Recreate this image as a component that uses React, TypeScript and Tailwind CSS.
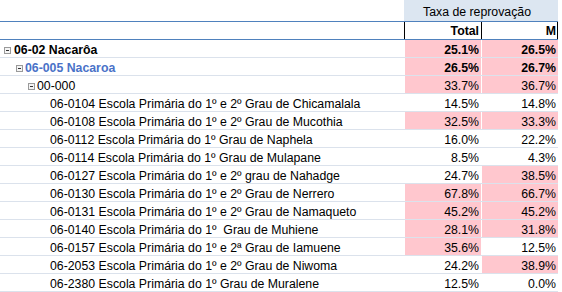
import React from "react";

type Row = {
  label: string;
  level: 0 | 1 | 2 | 3;
  total: string;
  m: string;
  pt: boolean;
  pm: boolean;
};

const rows: Row[] = [
  { label: "06-02 Nacarôa", level: 0, total: "25.1%", m: "26.5%", pt: true, pm: true },
  { label: "06-005 Nacaroa", level: 1, total: "26.5%", m: "26.7%", pt: true, pm: true },
  { label: "00-000", level: 2, total: "33.7%", m: "36.7%", pt: true, pm: true },
  { label: "06-0104 Escola Primária do 1º e 2º Grau de Chicamalala", level: 3, total: "14.5%", m: "14.8%", pt: false, pm: false },
  { label: "06-0108 Escola Primária do 1º e 2º Grau de Mucothia", level: 3, total: "32.5%", m: "33.3%", pt: true, pm: true },
  { label: "06-0112 Escola Primária do 1º Grau de Naphela", level: 3, total: "16.0%", m: "22.2%", pt: false, pm: false },
  { label: "06-0114 Escola Primária do 1º Grau de Mulapane", level: 3, total: "8.5%", m: "4.3%", pt: false, pm: false },
  { label: "06-0127 Escola Primária do 1º e 2º grau de Nahadge", level: 3, total: "24.7%", m: "38.5%", pt: false, pm: true },
  { label: "06-0130 Escola Primária do 1º e 2º Grau de Nerrero", level: 3, total: "67.8%", m: "66.7%", pt: true, pm: true },
  { label: "06-0131 Escola Primária do 1º e 2º Grau de Namaqueto", level: 3, total: "45.2%", m: "45.2%", pt: true, pm: true },
  { label: "06-0140 Escola Primária do 1º  Grau de Muhiene", level: 3, total: "28.1%", m: "31.8%", pt: true, pm: true },
  { label: "06-0157 Escola Primária do 1º e 2ª Grau de Iamuene", level: 3, total: "35.6%", m: "12.5%", pt: true, pm: false },
  { label: "06-2053 Escola Primária do 1º e 2º Grau de Niwoma", level: 3, total: "24.2%", m: "38.9%", pt: false, pm: true },
  { label: "06-2380 Escola Primária do 1º Grau de Muralene", level: 3, total: "12.5%", m: "0.0%", pt: false, pm: false },
];

function Minus() {
  return (
    <svg width="7" height="7" viewBox="0 0 7 7" className="shrink-0">
      <rect x="0.5" y="0.5" width="6" height="6" fill="#f4f4f4" stroke="#9a9a9a" />
      <rect x="2" y="3" width="3" height="1" fill="#333" />
    </svg>
  );
}

export default function App() {
  return (
    <div
      className="w-[562px] h-[292px] bg-white text-black overflow-hidden text-[12.3px]"
      style={{ fontFamily: '"Liberation Sans", Arial, sans-serif' }}
    >
      <div className="w-[558px]">
        {/* header row 1 */}
        <div className="flex h-[22px] border-b border-[#4f81bd]">
          <div className="w-[404px]" />
          <div className="w-[154px] bg-[#dce6f1] pl-[19px] pt-[4px] leading-[16px]">Taxa de reprovação</div>
        </div>
        {/* header row 2 */}
        <div className="flex h-[18px] border-b border-[#4f81bd] font-bold">
          <div className="w-[404px]" />
          <div className="w-[77px] border-l border-black text-right pr-[2px] pt-[2px] leading-[15px]">Total</div>
          <div className="w-[77px] border-l border-r border-black text-right pr-[1px] pt-[2px] leading-[15px]">M</div>
        </div>
        {rows.map((r, i) => {
          const bold = r.level < 2;
          const valBold = r.level < 2;
          return (
            <div key={i} className="flex h-[18px] border-b border-[#dbe2ec]">
              <div
                className={
                  "w-[404px] flex items-start pt-[2px] leading-[16px] whitespace-pre " +
                  (bold ? "font-bold " : "") +
                  (r.level === 1 ? "text-[#4a72c8] " : "")
                }
              >
                {r.level === 0 && (
                  <div className="flex items-center pl-[4px] gap-[3px]">
                    <div className="pt-[1px]"><Minus /></div>
                    <span>{r.label}</span>
                  </div>
                )}
                {r.level === 1 && (
                  <div className="flex items-center pl-[16px] gap-[2px]">
                    <div className="pt-[1px]"><Minus /></div>
                    <span>{r.label}</span>
                  </div>
                )}
                {r.level === 2 && (
                  <div className="flex items-center pl-[28px] gap-[2px]">
                    <div className="pt-[1px]"><Minus /></div>
                    <span>{r.label}</span>
                  </div>
                )}
                {r.level === 3 && <span className="pl-[50px]">{r.label}</span>}
              </div>
              <div className="w-[77px] pl-[1px]">
                <div
                  className={
                    "h-full text-right pr-[2px] pt-[2px] leading-[16px] " +
                    (r.pt ? "bg-[#ffc7ce] " : "") +
                    (valBold ? "font-bold" : "")
                  }
                >
                  {r.total}
                </div>
              </div>
              <div className="w-[77px] pl-[1px]">
                <div
                  className={
                    "h-full text-right pr-[2px] pt-[2px] leading-[16px] " +
                    (r.pm ? "bg-[#ffc7ce] " : "") +
                    (valBold ? "font-bold" : "")
                  }
                >
                  {r.m}
                </div>
              </div>
            </div>
          );
        })}
      </div>
    </div>
  );
}
